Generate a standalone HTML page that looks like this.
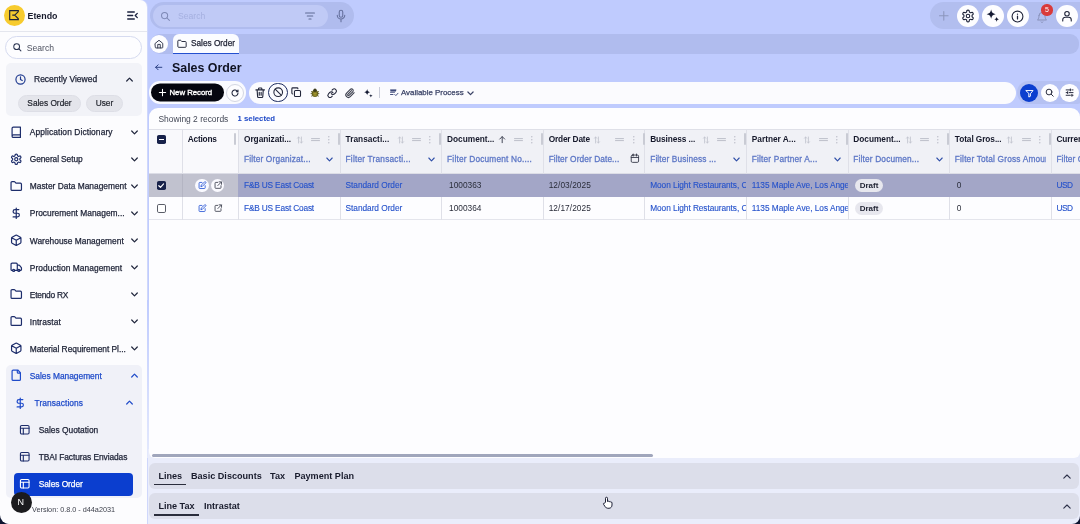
<!DOCTYPE html>
<html>
<head>
<meta charset="utf-8">
<title>Sales Order - Etendo</title>
<style>
*{box-sizing:border-box;margin:0;padding:0}
html,body{width:1080px;height:524px;overflow:hidden}
body{position:relative;background:#bfcbfe;font-family:"Liberation Sans",sans-serif;font-size:8.5px;color:#1b1f33}
.a{position:absolute}
.t{position:absolute;white-space:nowrap;line-height:12px;height:12px;margin-top:-6px}
.md{-webkit-text-stroke:0.25px currentColor}
.b{font-weight:700}
svg{position:absolute;overflow:visible}
.ic{fill:none;stroke:currentColor;stroke-width:2.3;stroke-linecap:round;stroke-linejoin:round}
#sb{left:0;top:0;width:147px;height:524px;background:#fcfcfe;border-top-right-radius:7px;border-bottom-left-radius:9px;box-shadow:1px 0 0 #cfd7fb}
#corner{left:0;top:508px;width:12px;height:16px;background:#0d1430}
.chip{position:absolute;top:95px;height:17px;border-radius:9px;background:#e4e5eb;border:1px solid #dddee6;text-align:center;line-height:15.5px;font-size:8.3px;color:#23262f;-webkit-text-stroke:0.2px currentColor}
.circ{position:absolute;border-radius:50%;background:#fdfdff}
.hd{position:absolute;top:129px;height:44.5px;border-left:1px solid #dfe0e8}
.hl{font-weight:700;font-size:8.3px;color:#15182a}
.fl{font-size:8.3px;color:#5d77c6;-webkit-text-stroke:0.28px currentColor}
.lnk{font-size:8.2px;color:#2552cb;-webkit-text-stroke:0.12px currentColor}
.cell{font-size:8.4px;color:#2a2d3a}
.draft{position:absolute;width:28px;height:13.4px;border-radius:7px;background:#e7e7ee;font-weight:700;font-size:8px;color:#1d2030;text-align:center;line-height:13.4px}
.tab{font-weight:700;font-size:9.1px;color:#181b2c}
</style>
</head>
<body>
<div id="root" style="position:absolute;left:0;top:0;width:1080px;height:524px;will-change:transform">
<svg width="0" height="0" style="position:absolute">
<defs>
<g id="i-book"><path d="M4 19.5v-15A2.500 2.500 0 0 1 6.500 2H20v20H6.500a2.500 2.500 0 0 1 0-5H20"/></g>
<g id="i-gear"><path d="M12.220 2h-.44a2 2 0 0 0-2 2v.180a2 2 0 0 1-1 1.730l-.43.250a2 2 0 0 1-2 0l-.15-.080a2 2 0 0 0-2.730.730l-.22.380a2 2 0 0 0 .730 2.730l.15.100a2 2 0 0 1 1 1.720v.510a2 2 0 0 1-1 1.740l-.15.090a2 2 0 0 0-.730 2.730l.22.380a2 2 0 0 0 2.730.730l.15-.080a2 2 0 0 1 2 0l.43.250a2 2 0 0 1 1 1.730V20a2 2 0 0 0 2 2h.44a2 2 0 0 0 2-2v-.180a2 2 0 0 1 1-1.730l.43-.250a2 2 0 0 1 2 0l.15.080a2 2 0 0 0 2.730-.730l.22-.390a2 2 0 0 0-.730-2.730l-.15-.080a2 2 0 0 1-1-1.740v-.5a2 2 0 0 1 1-1.740l.15-.090a2 2 0 0 0 .730-2.730l-.22-.380a2 2 0 0 0-2.730-.730l-.15.080a2 2 0 0 1-2 0l-.43-.250a2 2 0 0 1-1-1.730V4a2 2 0 0 0-2-2z"/><circle cx="12" cy="12" r="3"/></g>
<g id="i-folder"><path d="M20 20a2 2 0 0 0 2-2V8a2 2 0 0 0-2-2h-7.900a2 2 0 0 1-1.690-.9L9.600 3.900A2 2 0 0 0 7.930 3H4a2 2 0 0 0-2 2v13a2 2 0 0 0 2 2Z"/></g>
<g id="i-dollar"><path d="M12 2v20M17 5H9.500a3.500 3.500 0 0 0 0 7h5a3.500 3.500 0 0 1 0 7H6"/></g>
<g id="i-box"><path d="M21 8a2 2 0 0 0-1-1.730l-7-4a2 2 0 0 0-2 0l-7 4A2 2 0 0 0 3 8v8a2 2 0 0 0 1 1.730l7 4a2 2 0 0 0 2 0l7-4A2 2 0 0 0 21 16ZM3.300 7l8.700 5 8.700-5M12 22V12"/></g>
<g id="i-truck"><path d="M14 18V6a2 2 0 0 0-2-2H4a2 2 0 0 0-2 2v11a1 1 0 0 0 1 1h2M15 18H9M19 18h2a1 1 0 0 0 1-1v-3.650a1 1 0 0 0-.22-.624l-3.480-4.350A1 1 0 0 0 17.520 8H14"/><circle cx="7" cy="18" r="2"/><circle cx="17" cy="18" r="2"/></g>
<g id="i-file"><path d="M15 2H6a2 2 0 0 0-2 2v16a2 2 0 0 0 2 2h12a2 2 0 0 0 2-2V7ZM14 2v4a2 2 0 0 0 2 2h4"/></g>
<g id="i-layout"><rect x="3" y="3" width="18" height="18" rx="2.500"/><path d="M3 9h18M9 21V9"/></g>
<g id="i-chevd"><path d="M6 9l6 6 6-6"/></g>
<g id="i-chevu"><path d="M6 15l6-6 6 6"/></g>
</defs>
</svg>
<div id="corner" class="a"></div>
<div id="sb" class="a">
  <div class="a" style="left:4px;top:5px;width:21.300px;height:21.300px;border-radius:50%;background:#f7cb2e"></div>
  <svg style="left:9.300px;top:10.400px" width="10.600" height="10.400" viewBox="0 0 10.600 10.400"><path d="M9.900 0.700H0.700v9h9.200M3.300 5.200h2.400M5.700 5.200L9.600 1.400M5.700 5.200L9.600 9" fill="none" stroke="#1f2238" stroke-width="1.150"/></svg>
  <div class="t b" style="left:27.5px;top:16.100px;font-size:8.850px;color:#171a2c">Etendo</div>
  <svg class="ic" style="left:126.5px;top:11px;color:#1c2340" width="11" height="9" viewBox="0 0 11 9"><path d="M0.700 1h6.600M0.700 4.500h5M0.700 8h6.600M10.300 2.400L8.200 4.500l2.100 2.100" stroke-width="1.300"/></svg>
  <div class="a" style="left:0;top:31px;width:147px;height:1px;background:#e4e6ee"></div>
  <div class="a" style="left:5px;top:36px;width:137px;height:23px;border-radius:12px;border:1px solid #d6dbf0;background:#fdfdff"></div>
  <svg class="ic" style="left:13px;top:43px;color:#2a3350" width="8.5" height="8.5" viewBox="0 0 10 10"><circle cx="4.300" cy="4.300" r="3.400" stroke-width="1.200"/><path d="M7 7l2.300 2.300" stroke-width="1.200"/></svg>
  <div class="t" style="left:26.8px;top:47.7px;font-size:8.6px;color:#4d5160">Search</div>
  <div class="a" style="left:5.5px;top:63px;width:136.5px;height:53px;border-radius:5px;background:#f2f3f8"></div>
  <svg class="ic" style="left:15px;top:73.5px;color:#1f3a8f" width="11" height="11" viewBox="0 0 12 12"><circle cx="6" cy="6" r="5" stroke-width="1.300"/><path d="M6 3.200V6l1.900 1.100" stroke-width="1.300"/></svg>
  <div class="t md" style="left:34px;top:79.2px;font-size:8.5px;color:#1c2135">Recently Viewed</div>
  <svg class="ic" style="left:126px;top:76.5px;color:#20263c" width="7" height="5" viewBox="0 0 7 5"><path d="M0.700 4L3.500 1.100 6.300 4" stroke-width="1.200"/></svg>
  <div class="chip" style="left:18px;width:63px">Sales Order</div>
  <div class="chip" style="left:86px;width:37px">User</div>
  <div class="a" style="left:5.5px;top:364.5px;width:136.5px;height:133px;border-radius:5px;background:#f0f1f8"></div>
  <div class="a" style="left:13.7px;top:473px;width:119.3px;height:22.5px;border-radius:4px;background:#0b3ecf"></div>
  <svg class="ic" style="left:9.55px;top:125.75px;color:#1d2d6b" width="12.5" height="12.5" viewBox="0 0 24 24"><use href="#i-book"/></svg>
  <div class="t md" style="left:29.8px;top:132.20px;font-size:8.4px;letter-spacing:0.102px;color:#1c2135">Application Dictionary</div>
  <svg class="ic" style="left:130.90px;top:129.50px;color:#20263c" width="7" height="5" viewBox="0 0 7 5"><path d="M0.700 1L3.500 3.900 6.300 1" stroke-width="1.200"/></svg>
  <svg class="ic" style="left:9.55px;top:152.83px;color:#1d2d6b" width="12.5" height="12.5" viewBox="0 0 24 24"><use href="#i-gear"/></svg>
  <div class="t md" style="left:29.8px;top:159.28px;font-size:8.4px;letter-spacing:-0.101px;color:#1c2135">General Setup</div>
  <svg class="ic" style="left:130.90px;top:156.58px;color:#20263c" width="7" height="5" viewBox="0 0 7 5"><path d="M0.700 1L3.500 3.900 6.300 1" stroke-width="1.200"/></svg>
  <svg class="ic" style="left:9.55px;top:179.91px;color:#1d2d6b" width="12.5" height="12.5" viewBox="0 0 24 24"><use href="#i-folder"/></svg>
  <div class="t md" style="left:29.8px;top:186.36px;font-size:8.4px;letter-spacing:-0.001px;color:#1c2135">Master Data Management</div>
  <svg class="ic" style="left:130.90px;top:183.66px;color:#20263c" width="7" height="5" viewBox="0 0 7 5"><path d="M0.700 1L3.500 3.900 6.300 1" stroke-width="1.200"/></svg>
  <svg class="ic" style="left:9.55px;top:206.99px;color:#1d2d6b" width="12.5" height="12.5" viewBox="0 0 24 24"><use href="#i-dollar"/></svg>
  <div class="t md" style="left:29.8px;top:213.44px;font-size:8.4px;letter-spacing:0.014px;color:#1c2135">Procurement Managem...</div>
  <svg class="ic" style="left:130.90px;top:210.74px;color:#20263c" width="7" height="5" viewBox="0 0 7 5"><path d="M0.700 1L3.500 3.900 6.300 1" stroke-width="1.200"/></svg>
  <svg class="ic" style="left:9.55px;top:234.07px;color:#1d2d6b" width="12.5" height="12.5" viewBox="0 0 24 24"><use href="#i-box"/></svg>
  <div class="t md" style="left:29.8px;top:240.52px;font-size:8.4px;letter-spacing:0.013px;color:#1c2135">Warehouse Management</div>
  <svg class="ic" style="left:130.90px;top:237.82px;color:#20263c" width="7" height="5" viewBox="0 0 7 5"><path d="M0.700 1L3.500 3.900 6.300 1" stroke-width="1.200"/></svg>
  <svg class="ic" style="left:9.55px;top:261.15px;color:#1d2d6b" width="12.5" height="12.5" viewBox="0 0 24 24"><use href="#i-truck"/></svg>
  <div class="t md" style="left:29.8px;top:267.60px;font-size:8.4px;letter-spacing:0.055px;color:#1c2135">Production Management</div>
  <svg class="ic" style="left:130.90px;top:264.90px;color:#20263c" width="7" height="5" viewBox="0 0 7 5"><path d="M0.700 1L3.500 3.900 6.300 1" stroke-width="1.200"/></svg>
  <svg class="ic" style="left:9.55px;top:288.23px;color:#1d2d6b" width="12.5" height="12.5" viewBox="0 0 24 24"><use href="#i-folder"/></svg>
  <div class="t md" style="left:29.8px;top:294.68px;font-size:8.4px;letter-spacing:-0.246px;color:#1c2135">Etendo RX</div>
  <svg class="ic" style="left:130.90px;top:291.98px;color:#20263c" width="7" height="5" viewBox="0 0 7 5"><path d="M0.700 1L3.500 3.900 6.300 1" stroke-width="1.200"/></svg>
  <svg class="ic" style="left:9.55px;top:315.31px;color:#1d2d6b" width="12.5" height="12.5" viewBox="0 0 24 24"><use href="#i-folder"/></svg>
  <div class="t md" style="left:29.8px;top:321.76px;font-size:8.4px;letter-spacing:0.082px;color:#1c2135">Intrastat</div>
  <svg class="ic" style="left:130.90px;top:319.06px;color:#20263c" width="7" height="5" viewBox="0 0 7 5"><path d="M0.700 1L3.500 3.900 6.300 1" stroke-width="1.200"/></svg>
  <svg class="ic" style="left:9.55px;top:342.39px;color:#1d2d6b" width="12.5" height="12.5" viewBox="0 0 24 24"><use href="#i-box"/></svg>
  <div class="t md" style="left:29.8px;top:348.84px;font-size:8.4px;letter-spacing:-0.032px;color:#1c2135">Material Requirement Pl...</div>
  <svg class="ic" style="left:130.90px;top:346.14px;color:#20263c" width="7" height="5" viewBox="0 0 7 5"><path d="M0.700 1L3.500 3.900 6.300 1" stroke-width="1.200"/></svg>
  <svg class="ic" style="left:9.55px;top:369.47px;color:#1f4bc9" width="12.5" height="12.5" viewBox="0 0 24 24"><use href="#i-file"/></svg>
  <div class="t md" style="left:29.8px;top:375.92px;font-size:8.4px;letter-spacing:-0.017px;color:#1f4bc9">Sales Management</div>
  <svg class="ic" style="left:130.90px;top:373.22px;color:#1f4bc9" width="7" height="5" viewBox="0 0 7 5"><path d="M0.700 4L3.500 1.100 6.300 4" stroke-width="1.200"/></svg>
  <svg class="ic" style="left:14.05px;top:396.55px;color:#1f4bc9" width="12.5" height="12.5" viewBox="0 0 24 24"><use href="#i-dollar"/></svg>
  <div class="t md" style="left:34.5px;top:403.00px;font-size:8.4px;letter-spacing:0.080px;color:#1f4bc9">Transactions</div>
  <svg class="ic" style="left:126.30px;top:400.30px;color:#1f4bc9" width="7" height="5" viewBox="0 0 7 5"><path d="M0.700 4L3.500 1.100 6.300 4" stroke-width="1.200"/></svg>
  <svg class="ic" style="left:19.25px;top:424.13px;color:#1d2d6b" width="11.5" height="11.5" viewBox="0 0 24 24"><use href="#i-layout"/></svg>
  <div class="t md" style="left:38.7px;top:430.08px;font-size:8.4px;letter-spacing:-0.001px;color:#1c2135">Sales Quotation</div>
  <svg class="ic" style="left:19.25px;top:451.21px;color:#1d2d6b" width="11.5" height="11.5" viewBox="0 0 24 24"><use href="#i-layout"/></svg>
  <div class="t md" style="left:38.7px;top:457.16px;font-size:8.4px;letter-spacing:-0.078px;color:#1c2135">TBAI Facturas Enviadas</div>
  <svg class="ic" style="left:19.25px;top:478.29px;color:#ffffff" width="11.5" height="11.5" viewBox="0 0 24 24"><use href="#i-layout"/></svg>
  <div class="t md" style="left:38.7px;top:484.24px;font-size:8.4px;letter-spacing:-0.053px;color:#ffffff">Sales Order</div>
  <div class="a" style="left:11px;top:491.5px;width:21px;height:21px;border-radius:50%;background:#1b1b1e"></div>
  <div class="t b" style="left:17.6px;top:501.7px;font-size:9px;color:#fff;font-weight:400">N</div>
  <div class="t" style="left:32px;top:510.2px;font-size:7.25px;color:#3c3f4a">Version: 0.8.0 - d44a2031</div>
</div>
<div class="a" style="left:147px;top:300px;width:3px;height:158px;background:linear-gradient(#bfcbfe,#e4e9fd)"></div>
<!-- top search -->
<div class="a" style="left:150px;top:2px;width:204px;height:27px;border-radius:14px;background:#b0bcee"></div>
<div class="a" style="left:152.5px;top:5px;width:175px;height:22px;border-radius:11px;background:#c0caf6"></div>
<svg class="ic" style="left:160px;top:10.5px;color:#7d88b5" width="10.5" height="10.5" viewBox="0 0 24 24"><circle cx="10.500" cy="10.500" r="7"/><path d="M16 16l5.500 5.500"/></svg>
<div class="t" style="left:178px;top:15.8px;font-size:8.6px;color:#a5b0e0">Search</div>
<svg class="ic" style="left:305px;top:11.5px;color:#5f6a94" width="10" height="8" viewBox="0 0 10 8"><path d="M0.600 1h8.800M2.300 4h5.400M4 7h2" stroke-width="1.200"/></svg>
<svg class="ic" style="left:334.700px;top:8.800px;color:#66719e" width="12" height="14.500" viewBox="0 0 24 28"><rect x="8.500" y="2" width="7" height="14" rx="3.500" stroke-width="2.200"/><path d="M4.500 12a7.500 7.500 0 0 0 15 0M12 19.500V25" stroke-width="2.200"/></svg>
<!-- right icons -->
<div class="a" style="left:930px;top:2px;width:170px;height:27px;border-radius:14px;background:#b2beef"></div>
<svg class="ic" style="left:938.5px;top:11.200px;color:#8c96bd" width="9.600" height="9.600" viewBox="0 0 10 10"><path d="M5 0.500v9M0.500 5h9" stroke-width="1.100"/></svg>
<div class="circ" style="left:957px;top:5px;width:22px;height:22px"></div>
<div class="circ" style="left:981.8px;top:5px;width:22px;height:22px"></div>
<div class="circ" style="left:1006.8px;top:5px;width:22px;height:22px"></div>
<div class="circ" style="left:1056.4px;top:5px;width:22px;height:22px"></div>
<svg class="ic" style="left:961px;top:9px;color:#1d2238" width="14" height="14" viewBox="0 0 24 24"><use href="#i-gear" stroke-width="1.900"/></svg>
<svg style="left:985.300px;top:8.300px" width="15.500" height="15.500" viewBox="0 0 24 24"><path d="M9.500 2.500c.7 4.400 2.600 6.300 7 7-4.400.7-6.300 2.600-7 7-.7-4.400-2.600-6.300-7-7 4.400-.7 6.300-2.600 7-7ZM18 13.500c.4 2.400 1.600 3.600 4 4-2.400.4-3.600 1.600-4 4-.4-2.400-1.600-3.600-4-4 2.400-.4 3.600-1.600 4-4Z" fill="#141a33"/></svg>
<svg class="ic" style="left:1011.3px;top:9.500px;color:#1d2238" width="13" height="13" viewBox="0 0 24 24"><circle cx="12" cy="12" r="10" stroke-width="2"/><path d="M12 11.500v5M12 7.600v.1" stroke-width="2.300"/></svg>
<svg class="ic" style="left:1036.3px;top:10.500px;color:#8790b8" width="12" height="13" viewBox="0 0 24 26"><path d="M6 9a6 6 0 0 1 12 0c0 7 3 9 3 9H3s3-2 3-9M10.300 22a1.940 1.940 0 0 0 3.400 0" stroke-width="2"/></svg>
<div class="a" style="left:1041.4px;top:4.400px;width:11.2px;height:11.2px;border-radius:50%;background:#d93a3a;color:#fff;font-size:7px;line-height:11.2px;text-align:center">5</div>
<svg class="ic" style="left:1061.4px;top:10px;color:#1d2238" width="12" height="12" viewBox="0 0 24 24"><circle cx="12" cy="7.500" r="4.500" stroke-width="2.200"/><path d="M3.500 22v-2.500a5 5 0 0 1 5-5h7a5 5 0 0 1 5 5V22" stroke-width="2.200"/></svg>
<!-- tab band -->
<div class="a" style="left:150px;top:33.600px;width:929px;height:20.400px;border-radius:10px 9px 9px 10px;background:#b0bcee"></div>
<div class="circ" style="left:150px;top:35px;width:18px;height:18px"></div>
<svg class="ic" style="left:154px;top:39px;color:#2a2f45" width="10" height="10" viewBox="0 0 24 24"><path d="M3 10.500L12 3l9 7.500V20a1.500 1.500 0 0 1-1.500 1.500h-15A1.500 1.500 0 0 1 3 20ZM9 21.500V13h6v8.500" stroke-width="2.200"/></svg>
<div class="a" style="left:173px;top:34.200px;width:66.300px;height:19.800px;border-radius:6px 6px 0 0;background:#fbfcff;border-bottom:1.400px solid #2450cf"></div>
<svg class="ic" style="left:176.500px;top:39px;color:#23273a" width="10" height="10" viewBox="0 0 24 24"><use href="#i-folder"/></svg>
<div class="t md" style="left:191px;top:44.400px;font-size:8.250px;color:#1e2133">Sales Order</div>
<!-- title -->
<svg class="ic" style="left:154.600px;top:64.300px;color:#2a3f82" width="7.400" height="6.600" viewBox="0 0 9 8"><path d="M8.300 4H0.800M3.800 1L0.800 4l3 3" stroke-width="1.200"/></svg>
<div class="t b" style="left:172px;top:67.800px;font-size:12.400px;line-height:16px;height:16px;margin-top:-8px;color:#0f1222">Sales Order</div>
<!-- toolbar -->
<div class="a" style="left:148.500px;top:81.400px;width:97.600px;height:22.400px;border-radius:11px;background:#f9faff"></div>
<div class="a" style="left:151px;top:83px;width:73px;height:18px;border-radius:9px;background:#05060f;transform:translateY(0.450px)"></div>
<svg class="ic" style="left:158.800px;top:88.900px;color:#fff" width="7" height="7" viewBox="0 0 10 10"><path d="M5 0.500v9M0.500 5h9" stroke-width="1.500"/></svg>
<div class="t" style="left:169.500px;top:92.700px;font-size:7.800px;color:#fff;-webkit-text-stroke:0.350px #fff;letter-spacing:-0.030px">New Record</div>
<div class="a" style="left:226.200px;top:83.500px;width:18px;height:18px;border-radius:50%;background:#fdfdff;border:1px solid #d3d6e2"></div>
<svg class="ic" style="left:231.200px;top:88.600px;color:#1d2238" width="8" height="8" viewBox="0 0 24 24"><path d="M21 12a9 9 0 1 1-3-6.700L21 8M21 3v5h-5" stroke-width="3.100"/></svg>
<div class="a" style="left:249.400px;top:81.500px;width:766.500px;height:22.200px;border-radius:11px;background:#fbfbfe"></div>
<svg class="ic" style="left:254.70px;top:87.02px;color:#22263a" width="10.40" height="11.56" viewBox="0 0 22 24"><path d="M2 6h18M17.500 6l-1 14a2 2 0 0 1-2 2h-7a2 2 0 0 1-2-2l-1-14M7.500 6V3.500a1.500 1.500 0 0 1 1.500-1.500h4a1.500 1.500 0 0 1 1.500 1.500V6M9 11v6M13 11v6" stroke-width="2.400"/></svg>
<div class="a" style="left:268.300px;top:82.900px;width:19.400px;height:19.400px;border-radius:50%;border:1.200px solid #1b2a5e;background:transparent"></div>
<svg class="ic" style="left:272.80px;top:87.40px;color:#22263a" width="10.40" height="10.40" viewBox="0 0 24 24"><circle cx="12" cy="12" r="10" stroke-width="2.500"/><path d="M5 5l14 14" stroke-width="2.500"/></svg>
<svg class="ic" style="left:291.10px;top:87.40px;color:#22263a" width="10.40" height="10.40" viewBox="0 0 24 24"><rect x="8" y="8" width="14" height="14" rx="2.500" stroke-width="2.500"/><path d="M4 16a2 2 0 0 1-2-2V4a2 2 0 0 1 2-2h10a2 2 0 0 1 2 2" stroke-width="2.500"/></svg>
<svg style="left:309.600px;top:87.600px" width="10" height="10" viewBox="0 0 10 10"><ellipse cx="5" cy="5.400" rx="3.300" ry="3.500" fill="#6f6a1f"/><circle cx="5" cy="2.300" r="1.700" fill="#3c3b1c"/><path d="M1 3.300l1.500 1M9 3.300l-1.500 1M0.700 5.600h1.500M9.300 5.600H7.800M1.200 8.300l1.400-1M8.800 8.300l-1.400-1" stroke="#4a4a22" stroke-width="0.800"/><path d="M3.300 5.200h3.400M3.500 7h3" stroke="#c9b63c" stroke-width="0.800"/></svg>
<svg class="ic" style="left:327.30px;top:87.60px;color:#22263a" width="10.30" height="10.30" viewBox="0 0 24 24"><path d="M10 13a5 5 0 0 0 7.540.54l3-3a5 5 0 0 0-7.070-7.070l-1.720 1.710M14 11a5 5 0 0 0-7.540-.54l-3 3a5 5 0 0 0 7.070 7.070l1.710-1.710" stroke-width="2.500"/></svg>
<svg class="ic" style="left:344.60px;top:87.60px;color:#3a3d4c" width="10.30" height="10.30" viewBox="0 0 24 24"><path d="M21.440 11.050l-9.190 9.190a6 6 0 0 1-8.490-8.490l8.570-8.570A4 4 0 1 1 18 8.840l-8.590 8.570a2 2 0 0 1-2.830-2.830l8.490-8.480" stroke-width="2.500"/></svg>
<svg style="left:363px;top:87.500px" width="10.500" height="10.500" viewBox="0 0 24 24"><path d="M9.500 2.500c.7 4.400 2.600 6.300 7 7-4.400.7-6.300 2.600-7 7-.7-4.400-2.600-6.300-7-7 4.400-.7 6.300-2.600 7-7ZM18 13.500c.4 2.400 1.600 3.600 4 4-2.400.4-3.600 1.600-4 4-.4-2.400-1.600-3.600-4-4 2.400-.4 3.600-1.600 4-4Z" fill="#141a33"/></svg>
<div class="a" style="left:379px;top:87px;width:1px;height:11px;background:#c9ccd8"></div>
<svg class="ic" style="left:390px;top:88.700px;color:#3e4a7a" width="8.500" height="7.500" viewBox="0 0 17 15"><path d="M1 2h11M1 6.500h8M1 11h5M9.500 11l2.200 2.200 4.300-4.700" stroke-width="1.900"/><path d="M1 1.500h11v3.500H1z" fill="currentColor" stroke="none"/></svg>
<div class="t md" style="left:401px;top:92.600px;font-size:7.900px;color:#3a4266">Available Process</div>
<svg class="ic" style="left:466.500px;top:90.500px;color:#3a4266" width="7" height="5" viewBox="0 0 7 5"><path d="M0.900 1L3.500 3.700 6.100 1" stroke-width="1.200"/></svg>
<!-- right round buttons -->
<div class="a" style="left:1017px;top:81px;width:70px;height:23px;border-radius:11.500px;background:#b5c1f2"></div>
<div class="a" style="left:1019.800px;top:83.60px;width:18.700px;height:18.700px;border-radius:50%;background:#0b3ecf"></div>
<svg class="ic" style="left:1024.60px;top:88.50px;color:#fff" width="9.20" height="9.20" viewBox="0 0 24 24"><path d="M3 4h18l-7 8.500V19l-4 2v-8.500Z" stroke-width="2.500"/></svg>
<div class="circ" style="left:1040.500px;top:83.60px;width:18.400px;height:18.400px"></div>
<svg class="ic" style="left:1045.10px;top:88.30px;color:#22263a" width="9.20" height="9.20" viewBox="0 0 24 24"><circle cx="10.500" cy="10.500" r="7.500" stroke-width="2.500"/><path d="M16.200 16.200L21.500 21.500" stroke-width="2.500"/></svg>
<div class="circ" style="left:1060.400px;top:83.60px;width:18.400px;height:18.400px"></div>
<svg class="ic" style="left:1065.00px;top:88.30px;color:#22263a" width="9.20" height="9.20" viewBox="0 0 24 24"><path d="M3 5h11M18 5h3M3 12h4M11 12h10M3 19h11M18 19h3M14 2.500v5M7 9.500v5M18 16.500v5" stroke-width="2.500"/></svg>
<div class="a" style="left:148px;top:449px;width:932px;height:75px;background:#eaedfb"></div>
<!-- table card -->
<div class="a" style="left:149px;top:108.0px;width:931px;height:350px;border-radius:9px 9px 6px 6px;background:#fdfdff;overflow:hidden">
<div class="t" style="left:9.4px;top:11.0px;font-size:8.450px;color:#444957;letter-spacing:0.001px">Showing 2 records</div>
<div class="t b" style="left:88.6px;top:11.0px;font-size:7.800px;color:#1c47c6;letter-spacing:-0.032px">1 selected</div>
<div class="a" style="left:0;top:20.6px;width:931px;height:45px;background:#f0f1f6;border-top:1px solid #dfe0e8;border-bottom:1px solid #dcdde6"></div>
<div class="a" style="left:0;top:21.6px;width:89.2px;height:43.400px;background:#f9f9fc"></div>
<div class="a" style="left:0;top:111.4px;width:931px;height:1px;background:#e4e5ec"></div>
<div class="a" style="left:32.80px;top:21.0px;width:1px;height:91px;background:#dfe0e8"></div>
<div class="a" style="left:89.20px;top:21.0px;width:1px;height:91px;background:#dfe0e8"></div>
<div class="a" style="left:190.75px;top:21.0px;width:1px;height:91px;background:#dfe0e8"></div>
<div class="a" style="left:292.30px;top:21.0px;width:1px;height:91px;background:#dfe0e8"></div>
<div class="a" style="left:393.85px;top:21.0px;width:1px;height:91px;background:#dfe0e8"></div>
<div class="a" style="left:495.40px;top:21.0px;width:1px;height:91px;background:#dfe0e8"></div>
<div class="a" style="left:596.95px;top:21.0px;width:1px;height:91px;background:#dfe0e8"></div>
<div class="a" style="left:698.50px;top:21.0px;width:1px;height:91px;background:#dfe0e8"></div>
<div class="a" style="left:800.05px;top:21.0px;width:1px;height:91px;background:#dfe0e8"></div>
<div class="a" style="left:901.60px;top:21.0px;width:1px;height:91px;background:#dfe0e8"></div>
<div class="a" style="left:0;top:65.6px;width:931px;height:23px;background:#a3a6c7"></div>
<div class="a" style="left:0;top:65.6px;width:89.2px;height:23px;background:#c1c2cf"></div>
<div class="a" style="left:32.80px;top:65.6px;width:1px;height:23px;background:#b4b5c3"></div>
<div class="a" style="left:85.30px;top:24.6px;width:2px;height:12.800px;background:#c9cbd4;border-radius:1px"></div>
<div class="a" style="left:188.85px;top:24.6px;width:2px;height:12.800px;background:#c9cbd4;border-radius:1px"></div>
<div class="a" style="left:290.40px;top:24.6px;width:2px;height:12.800px;background:#c9cbd4;border-radius:1px"></div>
<div class="a" style="left:391.95px;top:24.6px;width:2px;height:12.800px;background:#c9cbd4;border-radius:1px"></div>
<div class="a" style="left:493.50px;top:24.6px;width:2px;height:12.800px;background:#c9cbd4;border-radius:1px"></div>
<div class="a" style="left:595.05px;top:24.6px;width:2px;height:12.800px;background:#c9cbd4;border-radius:1px"></div>
<div class="a" style="left:696.60px;top:24.6px;width:2px;height:12.800px;background:#c9cbd4;border-radius:1px"></div>
<div class="a" style="left:798.15px;top:24.6px;width:2px;height:12.800px;background:#c9cbd4;border-radius:1px"></div>
<div class="a" style="left:899.70px;top:24.6px;width:2px;height:12.800px;background:#c9cbd4;border-radius:1px"></div>
<div class="a" style="left:8.10px;top:27.20px;width:8.8px;height:8.8px;border-radius:1.800px;background:#18224a"></div>
<div class="a" style="left:9.90px;top:31.00px;width:5.200px;height:1.200px;background:#fff"></div>
<div class="a" style="left:8.10px;top:73.00px;width:8.8px;height:8.8px;border-radius:1.800px;background:#18224a"></div>
<svg class="ic" style="left:9.30px;top:74.80px;color:#fff" width="6.400" height="5.200" viewBox="0 0 6.400 5.200"><path d="M0.800 2.700L2.500 4.300 5.600 0.900" stroke-width="1.200"/></svg>
<div class="a" style="left:8.10px;top:96.10px;width:8.8px;height:8.8px;border-radius:1.800px;background:#fff;border:1.200px solid #5a5d68"></div>
<div class="t hl" style="left:38.7px;top:30.6px;font-size:8.3px;letter-spacing:-0.205px">Actions</div>
<div class="circ" style="left:46.20px;top:70.60px;width:13.400px;height:13.400px;background:#fafaff"></div>
<svg class="ic" style="left:48.60px;top:72.80px;color:#2f5bd6" width="8.600" height="8.600" viewBox="0 0 24 24"><path d="M11 4H5a2 2 0 0 0-2 2v13a2 2 0 0 0 2 2h13a2 2 0 0 0 2-2v-6M18.500 2.500a2.120 2.120 0 0 1 3 3L12 15l-4 1 1-4Z" stroke-width="2.400"/></svg>
<div class="circ" style="left:62.00px;top:70.60px;width:13.400px;height:13.400px;background:#fafaff"></div>
<svg class="ic" style="left:64.50px;top:73.00px;color:#3a3d4b" width="8.400" height="8.400" viewBox="0 0 24 24"><path d="M20 13.500V19a2 2 0 0 1-2 2H5a2 2 0 0 1-2-2V6a2 2 0 0 1 2-2h5.500M14.500 2.500h7v7M11 13L21 3" stroke-width="2.400"/></svg>
<svg class="ic" style="left:48.60px;top:95.90px;color:#2f5bd6" width="8.600" height="8.600" viewBox="0 0 24 24"><path d="M11 4H5a2 2 0 0 0-2 2v13a2 2 0 0 0 2 2h13a2 2 0 0 0 2-2v-6M18.500 2.500a2.120 2.120 0 0 1 3 3L12 15l-4 1 1-4Z" stroke-width="2.400"/></svg>
<svg class="ic" style="left:64.50px;top:96.10px;color:#3a3d4b" width="8.400" height="8.400" viewBox="0 0 24 24"><path d="M20 13.500V19a2 2 0 0 1-2 2H5a2 2 0 0 1-2-2V6a2 2 0 0 1 2-2h5.500M14.500 2.500h7v7M11 13L21 3" stroke-width="2.400"/></svg>
<div class="t hl" style="left:95.00px;top:31.4px;font-size:8.3px;letter-spacing:-0.037px">Organizati...</div>
<div class="t fl" style="left:95.00px;top:50.9px;font-size:8.3px;max-width:200px;overflow:hidden;letter-spacing:0.161px">Filter Organizat...</div>
<svg class="ic" style="left:147.50px;top:27.60px;color:#c3c5cf" width="6" height="8" viewBox="0 0 6 8"><path d="M1.600 7V1M0.500 2.200L1.600 1l1.100 1.200M4.400 1v6M3.300 5.800L4.400 7l1.100-1.200" stroke-width="0.900"/></svg>
<svg class="ic" style="left:161.80px;top:30.00px;color:#b6b8c4" width="9" height="3.200" viewBox="0 0 9 3.200"><path d="M0.500 0.600h8M0.500 2.600h8" stroke-width="0.900"/></svg>
<svg style="left:178.90px;top:27.80px" width="1.600" height="7.600" viewBox="0 0 1.600 7.600"><circle cx="0.800" cy="0.800" r="0.700" fill="#b9bbc6"/><circle cx="0.800" cy="3.800" r="0.700" fill="#b9bbc6"/><circle cx="0.800" cy="6.800" r="0.700" fill="#b9bbc6"/></svg>
<svg class="ic" style="left:177.40px;top:48.50px;color:#2f4fa8" width="7" height="5" viewBox="0 0 7 5"><path d="M0.800 1L3.500 3.800 6.200 1" stroke-width="1.100"/></svg>
<div class="t hl" style="left:196.55px;top:31.4px;font-size:8.3px;letter-spacing:0.028px">Transacti...</div>
<div class="t fl" style="left:196.55px;top:50.9px;font-size:8.3px;max-width:200px;overflow:hidden;letter-spacing:0.209px">Filter Transacti...</div>
<svg class="ic" style="left:249.05px;top:27.60px;color:#c3c5cf" width="6" height="8" viewBox="0 0 6 8"><path d="M1.600 7V1M0.500 2.200L1.600 1l1.100 1.200M4.400 1v6M3.300 5.800L4.400 7l1.100-1.200" stroke-width="0.900"/></svg>
<svg class="ic" style="left:263.35px;top:30.00px;color:#b6b8c4" width="9" height="3.200" viewBox="0 0 9 3.200"><path d="M0.500 0.600h8M0.500 2.600h8" stroke-width="0.900"/></svg>
<svg style="left:280.45px;top:27.80px" width="1.600" height="7.600" viewBox="0 0 1.600 7.600"><circle cx="0.800" cy="0.800" r="0.700" fill="#b9bbc6"/><circle cx="0.800" cy="3.800" r="0.700" fill="#b9bbc6"/><circle cx="0.800" cy="6.800" r="0.700" fill="#b9bbc6"/></svg>
<svg class="ic" style="left:278.95px;top:48.50px;color:#2f4fa8" width="7" height="5" viewBox="0 0 7 5"><path d="M0.800 1L3.500 3.800 6.200 1" stroke-width="1.100"/></svg>
<div class="t hl" style="left:298.10px;top:31.4px;font-size:8.3px;letter-spacing:-0.017px">Document...</div>
<div class="t fl" style="left:298.10px;top:50.9px;font-size:8.3px;max-width:200px;overflow:hidden;letter-spacing:0.195px">Filter Document No....</div>
<svg class="ic" style="left:350.40px;top:28.00px;color:#454857" width="6.400" height="7.200" viewBox="0 0 6.400 7.200"><path d="M3.200 6.700V0.700M0.700 3.100L3.200 0.600l2.500 2.500" stroke-width="1"/></svg>
<svg class="ic" style="left:364.90px;top:30.00px;color:#b6b8c4" width="9" height="3.200" viewBox="0 0 9 3.200"><path d="M0.500 0.600h8M0.500 2.600h8" stroke-width="0.900"/></svg>
<svg style="left:382.00px;top:27.80px" width="1.600" height="7.600" viewBox="0 0 1.600 7.600"><circle cx="0.800" cy="0.800" r="0.700" fill="#b9bbc6"/><circle cx="0.800" cy="3.800" r="0.700" fill="#b9bbc6"/><circle cx="0.800" cy="6.800" r="0.700" fill="#b9bbc6"/></svg>
<div class="t hl" style="left:399.65px;top:31.4px;font-size:8.3px;letter-spacing:-0.159px">Order Date</div>
<div class="t fl" style="left:399.65px;top:50.9px;font-size:8.3px;max-width:200px;overflow:hidden;letter-spacing:0.100px">Filter Order Date...</div>
<svg class="ic" style="left:445.35px;top:27.60px;color:#c3c5cf" width="6" height="8" viewBox="0 0 6 8"><path d="M1.600 7V1M0.500 2.200L1.600 1l1.100 1.200M4.400 1v6M3.300 5.800L4.400 7l1.100-1.200" stroke-width="0.900"/></svg>
<svg class="ic" style="left:466.45px;top:30.00px;color:#b6b8c4" width="9" height="3.200" viewBox="0 0 9 3.200"><path d="M0.500 0.600h8M0.500 2.600h8" stroke-width="0.900"/></svg>
<svg style="left:483.55px;top:27.80px" width="1.600" height="7.600" viewBox="0 0 1.600 7.600"><circle cx="0.800" cy="0.800" r="0.700" fill="#b9bbc6"/><circle cx="0.800" cy="3.800" r="0.700" fill="#b9bbc6"/><circle cx="0.800" cy="6.800" r="0.700" fill="#b9bbc6"/></svg>
<svg class="ic" style="left:480.65px;top:45.30px;color:#343746" width="9.800" height="10.600" viewBox="0 0 24 26"><rect x="3" y="5" width="18" height="18" rx="3" stroke-width="2.200"/><path d="M3 11h18M8 2.500v5M16 2.500v5" stroke-width="2.200"/></svg>
<div class="t hl" style="left:501.20px;top:31.4px;font-size:8.3px;letter-spacing:-0.094px">Business ...</div>
<div class="t fl" style="left:501.20px;top:50.9px;font-size:8.3px;max-width:200px;overflow:hidden;letter-spacing:0.124px">Filter Business ...</div>
<svg class="ic" style="left:553.70px;top:27.60px;color:#c3c5cf" width="6" height="8" viewBox="0 0 6 8"><path d="M1.600 7V1M0.500 2.200L1.600 1l1.100 1.200M4.400 1v6M3.300 5.800L4.400 7l1.100-1.200" stroke-width="0.900"/></svg>
<svg class="ic" style="left:568.00px;top:30.00px;color:#b6b8c4" width="9" height="3.200" viewBox="0 0 9 3.200"><path d="M0.500 0.600h8M0.500 2.600h8" stroke-width="0.900"/></svg>
<svg style="left:585.10px;top:27.80px" width="1.600" height="7.600" viewBox="0 0 1.600 7.600"><circle cx="0.800" cy="0.800" r="0.700" fill="#b9bbc6"/><circle cx="0.800" cy="3.800" r="0.700" fill="#b9bbc6"/><circle cx="0.800" cy="6.800" r="0.700" fill="#b9bbc6"/></svg>
<svg class="ic" style="left:583.60px;top:48.50px;color:#2f4fa8" width="7" height="5" viewBox="0 0 7 5"><path d="M0.800 1L3.500 3.800 6.200 1" stroke-width="1.100"/></svg>
<div class="t hl" style="left:602.75px;top:31.4px;font-size:8.3px;letter-spacing:0.003px">Partner A...</div>
<div class="t fl" style="left:602.75px;top:50.9px;font-size:8.3px;max-width:200px;overflow:hidden;letter-spacing:0.182px">Filter Partner A...</div>
<svg class="ic" style="left:655.25px;top:27.60px;color:#c3c5cf" width="6" height="8" viewBox="0 0 6 8"><path d="M1.600 7V1M0.500 2.200L1.600 1l1.100 1.200M4.400 1v6M3.300 5.800L4.400 7l1.100-1.200" stroke-width="0.900"/></svg>
<svg class="ic" style="left:669.55px;top:30.00px;color:#b6b8c4" width="9" height="3.200" viewBox="0 0 9 3.200"><path d="M0.500 0.600h8M0.500 2.600h8" stroke-width="0.900"/></svg>
<svg style="left:686.65px;top:27.80px" width="1.600" height="7.600" viewBox="0 0 1.600 7.600"><circle cx="0.800" cy="0.800" r="0.700" fill="#b9bbc6"/><circle cx="0.800" cy="3.800" r="0.700" fill="#b9bbc6"/><circle cx="0.800" cy="6.800" r="0.700" fill="#b9bbc6"/></svg>
<svg class="ic" style="left:685.15px;top:48.50px;color:#2f4fa8" width="7" height="5" viewBox="0 0 7 5"><path d="M0.800 1L3.500 3.800 6.200 1" stroke-width="1.100"/></svg>
<div class="t hl" style="left:704.30px;top:31.4px;font-size:8.3px;letter-spacing:-0.017px">Document...</div>
<div class="t fl" style="left:704.30px;top:50.9px;font-size:8.3px;max-width:200px;overflow:hidden;letter-spacing:0.166px">Filter Documen...</div>
<svg class="ic" style="left:756.80px;top:27.60px;color:#c3c5cf" width="6" height="8" viewBox="0 0 6 8"><path d="M1.600 7V1M0.500 2.200L1.600 1l1.100 1.200M4.400 1v6M3.300 5.800L4.400 7l1.100-1.200" stroke-width="0.900"/></svg>
<svg class="ic" style="left:771.10px;top:30.00px;color:#b6b8c4" width="9" height="3.200" viewBox="0 0 9 3.200"><path d="M0.500 0.600h8M0.500 2.600h8" stroke-width="0.900"/></svg>
<svg style="left:788.20px;top:27.80px" width="1.600" height="7.600" viewBox="0 0 1.600 7.600"><circle cx="0.800" cy="0.800" r="0.700" fill="#b9bbc6"/><circle cx="0.800" cy="3.800" r="0.700" fill="#b9bbc6"/><circle cx="0.800" cy="6.800" r="0.700" fill="#b9bbc6"/></svg>
<svg class="ic" style="left:786.70px;top:48.50px;color:#2f4fa8" width="7" height="5" viewBox="0 0 7 5"><path d="M0.800 1L3.500 3.800 6.200 1" stroke-width="1.100"/></svg>
<div class="t hl" style="left:805.85px;top:31.4px;font-size:8.3px;letter-spacing:-0.084px">Total Gros...</div>
<div class="t fl" style="left:805.85px;top:50.9px;font-size:8.3px;max-width:91.5px;overflow:hidden;letter-spacing:0.180px">Filter Total Gross Amount</div>
<svg class="ic" style="left:858.35px;top:27.60px;color:#c3c5cf" width="6" height="8" viewBox="0 0 6 8"><path d="M1.600 7V1M0.500 2.200L1.600 1l1.100 1.200M4.400 1v6M3.300 5.800L4.400 7l1.100-1.200" stroke-width="0.900"/></svg>
<svg class="ic" style="left:872.65px;top:30.00px;color:#b6b8c4" width="9" height="3.200" viewBox="0 0 9 3.200"><path d="M0.500 0.600h8M0.500 2.600h8" stroke-width="0.900"/></svg>
<svg style="left:889.75px;top:27.80px" width="1.600" height="7.600" viewBox="0 0 1.600 7.600"><circle cx="0.800" cy="0.800" r="0.700" fill="#b9bbc6"/><circle cx="0.800" cy="3.800" r="0.700" fill="#b9bbc6"/><circle cx="0.800" cy="6.800" r="0.700" fill="#b9bbc6"/></svg>
<div class="t hl" style="left:907.40px;top:31.4px;font-size:8.3px;letter-spacing:-0.117px">Currency</div>
<div class="t fl" style="left:907.40px;top:50.9px;font-size:8.3px;max-width:200px;overflow:hidden;letter-spacing:0.106px">Filter Currency</div>
<svg class="ic" style="left:959.90px;top:27.60px;color:#c3c5cf" width="6" height="8" viewBox="0 0 6 8"><path d="M1.600 7V1M0.500 2.200L1.600 1l1.100 1.200M4.400 1v6M3.300 5.800L4.400 7l1.100-1.200" stroke-width="0.900"/></svg>
<svg class="ic" style="left:974.20px;top:30.00px;color:#b6b8c4" width="9" height="3.200" viewBox="0 0 9 3.200"><path d="M0.500 0.600h8M0.500 2.600h8" stroke-width="0.900"/></svg>
<svg style="left:991.30px;top:27.80px" width="1.600" height="7.600" viewBox="0 0 1.600 7.600"><circle cx="0.800" cy="0.800" r="0.700" fill="#b9bbc6"/><circle cx="0.800" cy="3.800" r="0.700" fill="#b9bbc6"/><circle cx="0.800" cy="6.800" r="0.700" fill="#b9bbc6"/></svg>
<div class="t lnk" style="left:95.00px;top:77.1px;font-size:8.3px;letter-spacing:-0.168px">F&amp;B US East Coast</div>
<div class="t lnk" style="left:196.55px;top:77.1px;font-size:8.3px;letter-spacing:-0.035px">Standard Order</div>
<div class="t cell" style="left:300.10px;top:77.1px;font-size:8.3px;letter-spacing:-0.002px">1000363</div>
<div class="t cell" style="left:399.65px;top:77.1px;font-size:8.3px;letter-spacing:0.077px">12/03/2025</div>
<div class="t lnk" style="left:501.20px;top:77.1px;font-size:8.3px;width:95.8px;overflow:hidden;letter-spacing:-0.060px">Moon Light Restaurants, Co.</div>
<div class="t lnk" style="left:602.75px;top:77.1px;font-size:8.3px;width:95.8px;overflow:hidden;letter-spacing:-0.021px">1135 Maple Ave, Los Angeles</div>
<div class="draft" style="left:706.00px;top:70.6px">Draft</div>
<div class="t cell" style="left:807.85px;top:77.1px;font-size:8.3px">0</div>
<div class="t lnk" style="left:907.60px;top:77.1px;font-size:8.3px;letter-spacing:-0.510px">USD</div>
<div class="t lnk" style="left:95.00px;top:100.2px;font-size:8.3px;letter-spacing:-0.168px">F&amp;B US East Coast</div>
<div class="t lnk" style="left:196.55px;top:100.2px;font-size:8.3px;letter-spacing:-0.035px">Standard Order</div>
<div class="t cell" style="left:300.10px;top:100.2px;font-size:8.3px;letter-spacing:-0.002px">1000364</div>
<div class="t cell" style="left:399.65px;top:100.2px;font-size:8.3px;letter-spacing:0.077px">12/17/2025</div>
<div class="t lnk" style="left:501.20px;top:100.2px;font-size:8.3px;width:95.8px;overflow:hidden;letter-spacing:-0.060px">Moon Light Restaurants, Co.</div>
<div class="t lnk" style="left:602.75px;top:100.2px;font-size:8.3px;width:95.8px;overflow:hidden;letter-spacing:-0.021px">1135 Maple Ave, Los Angeles</div>
<div class="draft" style="left:706.00px;top:93.7px">Draft</div>
<div class="t cell" style="left:807.85px;top:100.2px;font-size:8.3px">0</div>
<div class="t lnk" style="left:907.60px;top:100.2px;font-size:8.3px;letter-spacing:-0.510px">USD</div>
<div class="a" style="left:3.0px;top:346.0px;width:501px;height:3px;border-radius:1.500px;background:#a0a6bc"></div>
</div>
<!-- bottom panels -->
<div class="a" style="left:149px;top:462.500px;width:930px;height:26px;border-radius:6px;background:#dcdeea"></div>
<div class="a" style="left:149px;top:493.200px;width:930px;height:26.200px;border-radius:6px;background:#dcdeea"></div>
<div class="t tab" style="left:158.400px;top:476.200px">Lines</div>
<div class="t tab" style="left:191px;top:476.200px">Basic Discounts</div>
<div class="t tab" style="left:270px;top:476.200px">Tax</div>
<div class="t tab" style="left:294.400px;top:476.200px">Payment Plan</div>
<div class="a" style="left:154px;top:483.800px;width:32px;height:1.300px;background:#2a2d3c"></div>
<div class="t tab" style="left:158.400px;top:506.400px">Line Tax</div>
<div class="t tab" style="left:204px;top:506.400px">Intrastat</div>
<div class="a" style="left:154px;top:514.400px;width:45px;height:1.300px;background:#2a2d3c"></div>
<svg class="ic" style="left:1063px;top:473.800px;color:#2c3048" width="8" height="5" viewBox="0 0 8 5"><path d="M0.800 4.200L4 1l3.200 3.200" stroke-width="1.100"/></svg>
<svg class="ic" style="left:1063px;top:503.800px;color:#2c3048" width="8" height="5" viewBox="0 0 8 5"><path d="M0.800 4.200L4 1l3.200 3.200" stroke-width="1.100"/></svg>
<!-- hand cursor -->
<svg style="left:601.500px;top:495.500px" width="11" height="13" viewBox="0 0 22 26"><path d="M7 12V4.500a2 2 0 0 1 4 0V11l1-.5a1.800 1.800 0 0 1 2.700 1 1.800 1.800 0 0 1 2.800.9 1.800 1.800 0 0 1 2.500 1.700V18c0 3.500-2.200 6.500-6 6.500h-2.500c-2.300 0-3.800-1-5-2.800L3 16.500c-.8-1.300.6-2.800 2-1.900Z" fill="#fff" stroke="#1d2036" stroke-width="2" stroke-linejoin="round"/></svg>
<!-- window corner -->
<svg style="left:1072px;top:516px" width="8" height="8" viewBox="0 0 8 8"><path d="M8 0v8H0A8 8 0 0 0 8 0Z" fill="#0d1430"/></svg>
</div>
</body>
</html>
